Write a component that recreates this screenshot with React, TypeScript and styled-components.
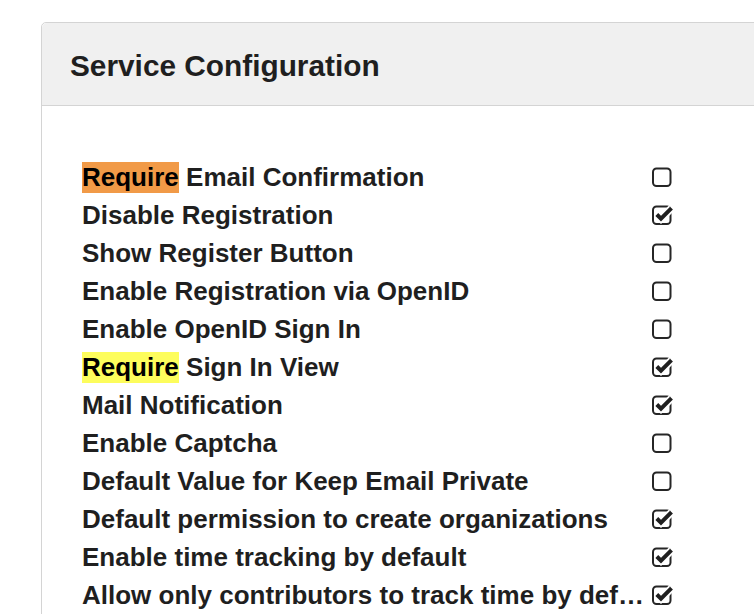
import React from "react";
import styled, { createGlobalStyle } from "styled-components";

const Global = createGlobalStyle`
  html, body { margin: 0; padding: 0; background: #fff; overflow: hidden; }
  body { font-family: "Liberation Sans", Arial, Helvetica, sans-serif; color: #1f1f1f; }
`;

const Page = styled.div`
  width: 754px;
  height: 614px;
  overflow: hidden;
  padding: 22px 0 0 41px;
  box-sizing: border-box;
`;

const Panel = styled.section`
  width: 760px;
  border: 1px solid #d4d4d4;
  border-radius: 5px;
  background: #fff;
`;

const Header = styled.header`
  height: 83px;
  background: #f0f0f0;
  border-bottom: 1px solid #d4d4d4;
  border-radius: 5px 5px 0 0;
  display: flex;
  align-items: center;
  padding: 4px 0 0 28px;
  box-sizing: border-box;
`;

const Title = styled.h2`
  margin: 0;
  font-size: 29.8px;
  font-weight: 700;
  color: #1f1f1f;
`;

const Body = styled.div`
  padding: 52px 0 60px 40px;
  display: flex;
  flex-direction: column;
`;

const Row = styled.div`
  display: grid;
  grid-template-columns: 564px 24px;
  column-gap: 4px;
  align-items: center;
  height: 38px;
`;

const Label = styled.span`
  font-size: 26px;
  font-weight: 700;
  color: #1f1f1f;
  white-space: nowrap;
  overflow: hidden;
  text-overflow: ellipsis;
`;

const Mark = styled.mark<{ $tone: "orange" | "yellow" }>`
  background: ${(p) => (p.$tone === "orange" ? "#f19a47" : "#fdfd5c")};
  color: #000;
  padding: 4px 0 4px;
`;

const Box = styled.svg`
  display: block;
  width: 24px;
  height: 24px;
`;

const CheckIcon = ({ checked }: { checked: boolean }) => (
  <Box viewBox="0 0 24 24">
    <rect x="3" y="3.5" width="17.5" height="17.5" rx="3.5" fill="none" stroke="#262626" strokeWidth="2" />
    {checked && (
      <>
        <path d="M6.8 11.5 L11 15.7 L21.5 5.2" fill="none" stroke="#fff" strokeWidth="7.5" strokeLinecap="butt" strokeLinejoin="miter" />
        <path d="M6.8 11.5 L11 15.7 L21.5 5.2" fill="none" stroke="#1f1f1f" strokeWidth="4" strokeLinecap="butt" strokeLinejoin="miter" />
      </>
    )}
  </Box>
);

type Item = { label: string; checked: boolean; mark?: "orange" | "yellow" };

const items: Item[] = [
  { label: "Email Confirmation", checked: false, mark: "orange" },
  { label: "Disable Registration", checked: true },
  { label: "Show Register Button", checked: false },
  { label: "Enable Registration via OpenID", checked: false },
  { label: "Enable OpenID Sign In", checked: false },
  { label: "Sign In View", checked: true, mark: "yellow" },
  { label: "Mail Notification", checked: true },
  { label: "Enable Captcha", checked: false },
  { label: "Default Value for Keep Email Private", checked: false },
  { label: "Default permission to create organizations", checked: true },
  { label: "Enable time tracking by default", checked: true },
  { label: "Allow only contributors to track time by default", checked: true },
];

export default function App() {
  return (
    <>
      <Global />
      <Page>
        <Panel>
          <Header>
            <Title>Service Configuration</Title>
          </Header>
          <Body>
            {items.map((it) => (
              <Row key={it.label}>
                <Label>
                  {it.mark ? (
                    <>
                      <Mark $tone={it.mark}>Require</Mark> {it.label}
                    </>
                  ) : (
                    it.label
                  )}
                </Label>
                <CheckIcon checked={it.checked} />
              </Row>
            ))}
          </Body>
        </Panel>
      </Page>
    </>
  );
}
